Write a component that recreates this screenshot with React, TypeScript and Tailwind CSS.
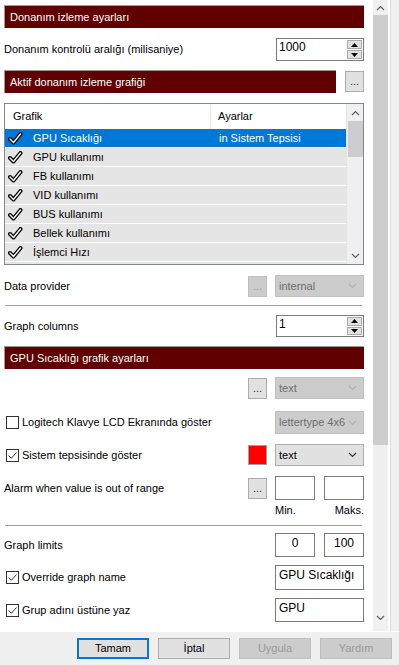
import React from 'react'

const font = { fontFamily: '"Liberation Sans", Arial, sans-serif' }

function Chevron({ up = false, color = '#606060' }: { up?: boolean; color?: string }) {
  return (
    <svg width="9" height="6" viewBox="0 0 9 6">
      <path d={up ? 'M1 5 L4.5 1.5 L8 5' : 'M1 1 L4.5 4.5 L8 1'} fill="none" stroke={color} strokeWidth="1.2" />
    </svg>
  )
}

function Tri({ up }: { up?: boolean }) {
  return (
    <svg width="7" height="4" viewBox="0 0 7 4">
      <path d={up ? 'M0 4 L3.5 0 L7 4 Z' : 'M0 0 L3.5 4 L7 0 Z'} fill="#000" />
    </svg>
  )
}

function Header({ text, className = '' }: { text: string; className?: string }) {
  return (
    <div className={`h-[23px] bg-[#600000] border-t border-l border-[#9a9a9a] text-white flex items-center pl-[5px] ${className}`}>
      {text}
    </div>
  )
}

function Spin({ value }: { value: string }) {
  return (
    <div className="w-[88px] h-full border border-[#7a7a7a] bg-white flex">
      <div className="flex-1 pl-[2px] pt-[2px] text-[12px] leading-none flex items-start">{value}</div>
      <div className="w-[16px] flex flex-col gap-px py-px pr-px">
        <div className="flex-1 bg-[#e1e1e1] border border-[#adadad] flex items-center justify-center"><Tri up /></div>
        <div className="flex-1 bg-[#e1e1e1] border border-[#adadad] flex items-center justify-center"><Tri /></div>
      </div>
    </div>
  )
}

function Dots({ disabled = false }: { disabled?: boolean }) {
  return (
    <div className={`w-[19px] h-[21px] border flex items-end justify-center pb-[4px] leading-none ${disabled ? 'bg-[#cccccc] border-[#bfbfbf] text-[#9a9a9a]' : 'bg-[#e1e1e1] border-[#adadad] text-[#333]'}`}>
      ...
    </div>
  )
}

function Combo({ text, disabled = false }: { text: string; disabled?: boolean }) {
  return (
    <div className={`w-[89px] h-full border flex items-center pl-[3px] pr-[6px] ${disabled ? 'bg-[#cccccc] border-[#bfbfbf] text-[#6d6d6d]' : 'bg-[#e1e1e1] border-[#adadad] text-black'}`}>
      <span className="flex-1">{text}</span>
      <Chevron color={disabled ? '#b0b0b0' : '#333'} />
    </div>
  )
}

function Check({ checked }: { checked: boolean }) {
  return (
    <div className="w-[13px] h-[13px] border border-[#333] bg-white flex items-center justify-center mr-[3px]">
      {checked && (
        <svg width="11" height="11" viewBox="0 0 11 11">
          <path d="M1.5 5.5 L4.3 8.3 L9.5 2.5" fill="none" stroke="#333" strokeWidth="1" />
        </svg>
      )}
    </div>
  )
}

function Box({ text = '', w = 'w-[40px]', center = false }: { text?: string; w?: string; center?: boolean }) {
  return (
    <div className={`${w} h-full border border-[#7a7a7a] bg-white flex items-start pt-[3px] text-[12px] leading-none ${center ? 'justify-center' : 'pl-[3px]'}`}>
      {text}
    </div>
  )
}

function Tick() {
  return (
    <svg width="15" height="13" viewBox="0 0 15 13">
      <path d="M2 7 L5.5 10.5 L12.5 2" fill="none" stroke="#000" strokeWidth="4" strokeLinecap="round" strokeLinejoin="round" />
      <path d="M2 7 L5.5 10.5 L12.5 2" fill="none" stroke="#fff" strokeWidth="1.4" strokeLinecap="round" strokeLinejoin="round" />
    </svg>
  )
}

const rows = ['GPU Sıcaklığı', 'GPU kullanımı', 'FB kullanımı', 'VID kullanımı', 'BUS kullanımı', 'Bellek kullanımı', 'İşlemci Hızı']

function List() {
  return (
    <div className="mt-[10px] h-[162px] border border-[#828790] bg-white flex overflow-hidden">
      <div className="flex-1 flex flex-col">
        <div className="h-[25px] shrink-0 flex items-center bg-white">
          <div className="w-[206px] pl-[8px] border-r border-[#e5e5e5] h-full flex items-center">Grafik</div>
          <div className="pl-[7px]">Ayarlar</div>
        </div>
        {rows.map((r, i) => (
          <div key={r} className={`h-[19px] shrink-0 flex items-center border-b border-white ${i === 0 ? 'bg-[#0078d7] text-white' : 'bg-[#e5e5e5]'}`}>
            <div className="w-[28px] pl-[3px] flex items-center"><Tick /></div>
            <div className="w-[186px]">{r}</div>
            <div>{i === 0 ? 'in Sistem Tepsisi' : ''}</div>
          </div>
        ))}
        <div className="h-[19px] shrink-0 bg-[#e5e5e5]" />
      </div>
      <div className="w-[17px] bg-[#f0f0f0] flex flex-col items-center border-l border-[#e5e5e5]">
        <div className="h-[17px] flex items-center"><Chevron up /></div>
        <div className="w-[15px] h-[36px] bg-[#cdcdcd]" />
        <div className="flex-1" />
        <div className="h-[17px] flex items-center"><Chevron /></div>
      </div>
    </div>
  )
}

function Btn({ text, primary = false, disabled = false }: { text: string; primary?: boolean; disabled?: boolean }) {
  return (
    <div className={`w-[72px] h-[21px] flex items-center justify-center ${primary ? 'border-2 border-[#0078d7] bg-[#e1e1e1]' : disabled ? 'border border-[#bfbfbf] bg-[#cccccc] text-[#9a9a9a]' : 'border border-[#adadad] bg-[#e1e1e1]'}`}>
      {text}
    </div>
  )
}

export default function App() {
  return (
    <div className="w-[399px] h-[665px] bg-[#f0f0f0] flex flex-col text-[11px] text-black overflow-hidden" style={font}>
      <div className="h-[631px] flex shrink-0">
        <div className="w-[373px] bg-white pl-[4px] pr-[9px] flex flex-col">
          <Header text="Donanım izleme ayarları" className="mt-[5px]" />

          <div className="mt-[10px] h-[23px] flex items-center justify-between">
            <span>Donanım kontrolü aralığı (milisaniye)</span>
            <Spin value="1000" />
          </div>

          <div className="mt-[9px] h-[23px] flex items-center justify-between">
            <Header text="Aktif donanım izleme grafiği" className="w-[332px]" />
            <Dots />
          </div>

          <List />

          <div className="mt-[10px] h-[22px] flex items-center">
            <span className="flex-1">Data provider</span>
            <Dots disabled />
            <div className="w-[8px]" />
            <Combo text="internal" disabled />
          </div>

          <div className="mt-[8px] h-px bg-[#a0a0a0] mr-[2px] ml-[1px]" />

          <div className="mt-[9px] h-[22px] flex items-center justify-between">
            <span>Graph columns</span>
            <Spin value="1" />
          </div>

          <Header text="GPU Sıcaklığı grafik ayarları" className="mt-[9px]" />

          <div className="mt-[8px] h-[22px] flex items-center">
            <span className="flex-1" />
            <Dots />
            <div className="w-[8px]" />
            <Combo text="text" disabled />
          </div>

          <div className="mt-[12px] h-[23px] flex items-center">
            <div className="flex-1 flex items-center pl-[2px]"><Check checked={false} />Logitech Klavye LCD Ekranında göster</div>
            <Combo text="lettertype 4x6" disabled />
          </div>

          <div className="mt-[10px] h-[22px] flex items-center">
            <div className="flex-1 flex items-center pl-[2px]"><Check checked />Sistem tepsisinde göster</div>
            <div className="w-[19px] h-[20px] bg-[#ff0000] border border-[#a0a0a0]" />
            <div className="w-[8px]" />
            <Combo text="text" />
          </div>

          <div className="mt-[10px] h-[24px] flex items-center">
            <span className="flex-1">Alarm when value is out of range</span>
            <Dots />
            <div className="w-[8px]" />
            <Box />
            <div className="w-[9px]" />
            <Box />
          </div>

          <div className="h-[18px] flex items-end justify-end">
            <span className="w-[89px] flex justify-between"><span>Min.</span><span>Maks.</span></span>
          </div>

          <div className="mt-[7px] h-px bg-[#a0a0a0] mr-[2px] ml-[1px]" />

          <div className="mt-[7px] h-[24px] flex items-center">
            <span className="flex-1">Graph limits</span>
            <Box text="0" center />
            <div className="w-[9px]" />
            <Box text="100" center />
          </div>

          <div className="mt-[8px] h-[25px] flex items-center">
            <div className="flex-1 flex items-center pl-[2px]"><Check checked />Override graph name</div>
            <Box text="GPU Sıcaklığı" w="w-[89px]" />
          </div>

          <div className="mt-[8px] h-[24px] flex items-center">
            <div className="flex-1 flex items-center pl-[2px]"><Check checked />Grup adını üstüne yaz</div>
            <Box text="GPU" w="w-[89px]" />
          </div>
        </div>

        <div className="w-[15px] bg-[#f0f0f0] flex flex-col items-center">
          <div className="h-[15px] flex items-center"><Chevron up /></div>
          <div className="w-[15px] h-[430px] bg-[#cdcdcd]" />
          <div className="flex-1" />
          <div className="h-[15px] flex items-center mb-[6px]"><Chevron /></div>
        </div>
        <div className="w-[2px] bg-white" />
        <div className="w-px bg-[#dcdcdc]" />
        <div className="flex-1 bg-[#f0f0f0]" />
      </div>

      <div className="h-px bg-white" />
      <div className="flex justify-end gap-[9px] pr-[7px] mt-[6px]">
        <Btn text="Tamam" primary />
        <Btn text="İptal" />
        <Btn text="Uygula" disabled />
        <Btn text="Yardım" disabled />
      </div>
    </div>
  )
}
